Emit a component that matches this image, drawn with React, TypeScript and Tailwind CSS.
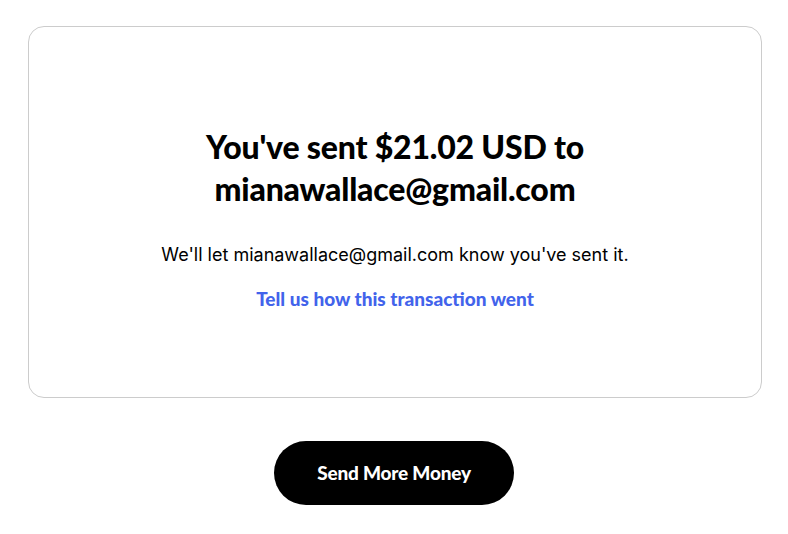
import React from "react";

export default function App() {
  return (
    <div className="min-h-screen bg-white pt-[26px] font-['Lato',sans-serif]">
      <section className="ml-[28px] flex h-[372px] w-[734px] flex-col items-center rounded-[16px] border border-[#cccccc] px-8 pt-[99px]">
        <h1 className="text-center text-[32px] font-black leading-[42px] tracking-[-0.2px] text-black">
          You've sent $21.02 USD to
          <br />
          mianawallace@gmail.com
        </h1>
        <p className="mt-[32px] font-['Inter',sans-serif] text-[18px] leading-[26px] text-black">
          We'll let mianawallace@gmail.com know you've sent it.
        </p>
        <a href="#" className="mt-[18px] text-[19px] font-black leading-[26px] text-[#4263eb]">
          Tell us how this transaction went
        </a>
      </section>
      <div className="mt-[43px] flex justify-center">
        <button className="h-[64px] w-[240px] rounded-full bg-black text-[19px] font-black tracking-[-0.2px] text-white">
          Send More Money
        </button>
      </div>
    </div>
  );
}
